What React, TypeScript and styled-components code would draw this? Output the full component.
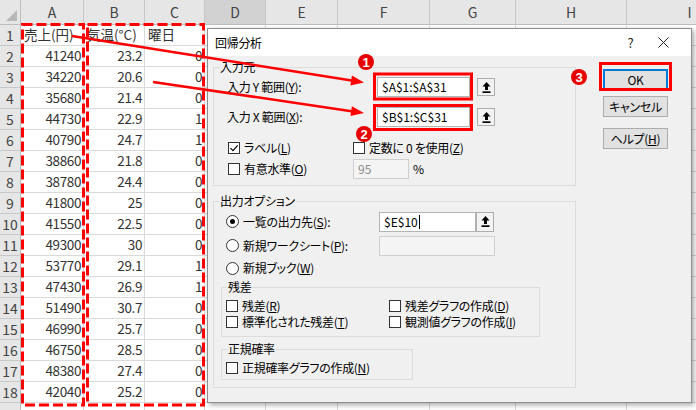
import React from "react";
import styled, { createGlobalStyle } from "styled-components";

const COLS = [21, 63, 61, 60, 61, 72, 92, 86, 111, 126];
const LETTERS = ["A", "B", "C", "D", "E", "F", "G", "H", "I"];

const data: string[][] = [
  ["売上(円)", "気温(°C)", "曜日"],
  ["41240", "23.2", "0"],
  ["34220", "20.6", "0"],
  ["35680", "21.4", "0"],
  ["44730", "22.9", "1"],
  ["40790", "24.7", "1"],
  ["38860", "21.8", "0"],
  ["38780", "24.4", "0"],
  ["41800", "25", "0"],
  ["41550", "22.5", "0"],
  ["49300", "30", "0"],
  ["53770", "29.1", "1"],
  ["47430", "26.9", "1"],
  ["51490", "30.7", "0"],
  ["46990", "25.7", "0"],
  ["46750", "28.5", "0"],
  ["48380", "27.4", "0"],
  ["42040", "25.2", "0"],
];

const GlobalStyle = createGlobalStyle`
  body {
    margin: 0;
    background: #fff;
    overflow: hidden;
  }
`;

const Page = styled.div`
  position: relative;
  width: 696px;
  height: 410px;
  overflow: hidden;
  background: #fff;
`;

/* ---------- sheet ---------- */

const Sheet = styled.div`
  display: grid;
  grid-template-columns: ${COLS.map((c) => c + "px").join(" ")};
  grid-template-rows: 25px;
  grid-auto-rows: 21px;
  font-family: "Noto Sans CJK JP", sans-serif;
  font-feature-settings: "palt" 1;
  font-size: 13.5px;
  line-height: 1;
  color: #333;
`;

const Corner = styled.div`
  position: relative;
  background: #e6e6e6;
  border-right: 1px solid #bdbdbd;
  border-bottom: 1px solid #bdbdbd;
  &::after {
    content: "";
    position: absolute;
    right: 3px;
    bottom: 3px;
    border-left: 11px solid transparent;
    border-bottom: 11px solid #b8b8b8;
  }
`;

const ColHead = styled.div<{ $active?: boolean }>`
  display: flex;
  align-items: center;
  justify-content: center;
  background: ${(p) => (p.$active ? "#d2d2d2" : "#e6e6e6")};
  border-right: 1px solid #c8c8c8;
  border-bottom: 1px solid #bdbdbd;
  color: #444;
  font-size: 14px;
`;

const RowHead = styled.div`
  display: flex;
  align-items: center;
  justify-content: center;
  background: #e6e6e6;
  border-right: 1px solid #bdbdbd;
  border-bottom: 1px solid #c8c8c8;
  color: #444;
  font-size: 14px;
`;

const Cell = styled.div<{ $num?: boolean }>`
  display: flex;
  align-items: center;
  justify-content: ${(p) => (p.$num ? "flex-end" : "flex-start")};
  padding: 0 2px 0 3px;
  border-right: 1px solid #dadada;
  border-bottom: 1px solid #dadada;
  white-space: nowrap;
  letter-spacing: ${(p) => (p.$num ? "-0.4px" : "0")};
`;

/* ---------- dialog ---------- */

const Dialog = styled.div`
  position: absolute;
  left: 207px;
  top: 28px;
  width: 485px;
  height: 375px;
  box-sizing: border-box;
  display: flex;
  flex-direction: column;
  background: #f0f0f0;
  border: 1px solid #8e8e8e;
  box-shadow: 2px 2px 5px rgba(0, 0, 0, 0.35);
  font-family: "Noto Sans CJK JP", sans-serif;
  font-feature-settings: "palt" 1;
  font-size: 12px;
  line-height: 16px;
  letter-spacing: -0.3px;
  color: #000;
`;

const TitleBar = styled.div`
  height: 27px;
  display: flex;
  align-items: center;
  padding-left: 7px;
  background: #fff;
`;

const Title = styled.span`
  flex: 1;
`;

const TitleButton = styled.span`
  width: 33px;
  display: flex;
  justify-content: center;
  align-items: center;
  color: #222;
  font-size: 13px;
  &:last-child {
    margin-right: 11px;
  }
`;

const Body = styled.div`
  display: flex;
  gap: 27px;
  padding: 3px 0 0 5px;
`;

const LeftCol = styled.div`
  width: 363px;
  display: flex;
  flex-direction: column;
`;

const RightCol = styled.div`
  width: 65px;
  padding-top: 10px;
  display: flex;
  flex-direction: column;
`;

const Group = styled.fieldset<{ $w?: number; $mt?: number; $ml?: number; $pb?: number }>`
  margin: ${(p) => p.$mt ?? 0}px 0 0 ${(p) => p.$ml ?? 0}px;
  padding: 0 0 ${(p) => p.$pb ?? 0}px;
  width: ${(p) => (p.$w ? p.$w + "px" : "auto")};
  box-sizing: border-box;
  min-width: 0;
  border: 1px solid #dcdcdc;
`;

const Legend = styled.legend`
  margin-left: 5px;
  padding: 0 1px;
  line-height: 16px;
`;

const Row = styled.div<{ $mt?: number; $h?: number; $pl?: number }>`
  display: flex;
  align-items: center;
  height: ${(p) => p.$h ?? 20}px;
  margin-top: ${(p) => p.$mt ?? 0}px;
  padding-left: ${(p) => p.$pl ?? 13}px;
  white-space: nowrap;
`;

const FieldLabel = styled.span<{ $w: number }>`
  width: ${(p) => p.$w}px;
  flex-shrink: 0;
`;

const TextBox = styled.div<{ $w: number; $disabled?: boolean }>`
  width: ${(p) => p.$w}px;
  height: 20px;
  box-sizing: border-box;
  display: flex;
  align-items: center;
  padding-left: 4px;
  letter-spacing: 0;
  background: ${(p) => (p.$disabled ? "#f4f4f4" : "#fff")};
  border: 1px solid ${(p) => (p.$disabled ? "#cfcfcf" : "#b4b4b4")};
  color: ${(p) => (p.$disabled ? "#8a8a8a" : "#000")};
  flex-shrink: 0;
`;

const Caret = styled.span`
  display: inline-block;
  width: 1px;
  height: 14px;
  margin-left: 1px;
  background: #000;
`;

const RefButton = styled.div<{ $ml?: number; $h?: number }>`
  width: 18px;
  height: ${(p) => p.$h ?? 18}px;
  margin-left: ${(p) => p.$ml ?? 7}px;
  box-sizing: border-box;
  display: flex;
  align-items: center;
  justify-content: center;
  background: #f3f3f3;
  border: 1px solid #adadad;
  flex-shrink: 0;
`;

const Item = styled.label<{ $w?: number }>`
  display: flex;
  align-items: center;
  gap: 4px;
  width: ${(p) => (p.$w ? p.$w + "px" : "auto")};
  flex-shrink: 0;
`;

const Box = styled.span`
  width: 12px;
  height: 12px;
  box-sizing: border-box;
  display: inline-flex;
  align-items: center;
  justify-content: center;
  background: #fff;
  border: 1px solid #333;
  flex-shrink: 0;
`;

const Radio = styled.span<{ $on?: boolean }>`
  width: 13px;
  height: 13px;
  box-sizing: border-box;
  border-radius: 50%;
  display: inline-flex;
  align-items: center;
  justify-content: center;
  background: #fff;
  border: 1px solid #333;
  flex-shrink: 0;
  &::after {
    content: "";
    width: 5px;
    height: 5px;
    border-radius: 50%;
    background: ${(p) => (p.$on ? "#000" : "transparent")};
  }
`;

const Grid2 = styled.div`
  display: grid;
  grid-template-columns: 163px auto;
  grid-auto-rows: 16px;
  margin-top: 3px;
  padding-left: 4px;
  white-space: nowrap;
`;

const Button = styled.div<{ $mt?: number; $focus?: boolean }>`
  height: 21px;
  margin-top: ${(p) => p.$mt ?? 0}px;
  box-sizing: border-box;
  display: flex;
  align-items: center;
  justify-content: center;
  background: #e1e1e1;
  border: 1px solid ${(p) => (p.$focus ? "#0078d7" : "#adadad")};
  box-shadow: ${(p) => (p.$focus ? "inset 0 0 0 1px #0078d7" : "none")};
`;

const Percent = styled.span`
  margin-left: 4px;
`;

/* ---------- annotations ---------- */

const Overlay = styled.svg`
  position: absolute;
  left: 0;
  top: 0;
  pointer-events: none;
`;

const RED = "#f00";

const UpIcon = () => (
  <svg width="9" height="11" viewBox="0 0 9 11">
    <path d="M4.5 0 L8.5 4.6 H6 V8 H3 V4.6 H0.5 Z" fill="#000" />
    <rect x="0.5" y="9.3" width="8" height="1.7" fill="#000" />
  </svg>
);

const Check = () => (
  <svg width="10" height="10" viewBox="0 0 10 10">
    <path d="M1.5 5.2 L4 7.7 L8.7 2.3" fill="none" stroke="#000" strokeWidth="1.2" />
  </svg>
);

const CloseIcon = () => (
  <svg width="11" height="11" viewBox="0 0 11 11">
    <path d="M0.5 0.5 L10.5 10.5 M10.5 0.5 L0.5 10.5" stroke="#222" strokeWidth="1" />
  </svg>
);

const Arrow = ({ x1, y1, x2, y2 }: { x1: number; y1: number; x2: number; y2: number }) => {
  const len = Math.hypot(x2 - x1, y2 - y1);
  const ux = (x2 - x1) / len;
  const uy = (y2 - y1) / len;
  const hl = 13;
  const hw = 5;
  const bx = x2 - ux * hl;
  const by = y2 - uy * hl;
  const pts = `${x2},${y2} ${bx - uy * hw},${by + ux * hw} ${bx + uy * hw},${by - ux * hw}`;
  return (
    <g>
      <line x1={x1} y1={y1} x2={bx + ux * 2} y2={by + uy * 2} stroke={RED} strokeWidth={2.5} />
      <polygon points={pts} fill={RED} />
    </g>
  );
};

const Marker = ({ x, y, n }: { x: number; y: number; n: number }) => (
  <g>
    <circle cx={x} cy={y} r={8} fill="#e60000" />
    <text
      x={x}
      y={y + 4.5}
      textAnchor="middle"
      fill="#fff"
      fontSize="13"
      fontWeight="bold"
      fontFamily="Liberation Sans, sans-serif"
    >
      {n}
    </text>
  </g>
);

const Annotations = () => (
  <Overlay width={696} height={410}>
    <rect x={22.5} y={24.5} width={61} height={380.5} fill="none" stroke={RED} strokeWidth={3} strokeDasharray="10 4" />
    <rect x={87.5} y={24.5} width={116} height={380.5} fill="none" stroke={RED} strokeWidth={3} strokeDasharray="10 4" />
    <Arrow x1={72} y1={36} x2={364} y2={82.5} />
    <Arrow x1={153} y1={82} x2={364} y2={113} />
    <rect x={374.5} y={74} width={97} height={25} fill="none" stroke={RED} strokeWidth={3} />
    <rect x={374.5} y={105.5} width={97} height={24} fill="none" stroke={RED} strokeWidth={3} />
    <rect x={600.5} y={63.5} width={70} height={26} fill="none" stroke={RED} strokeWidth={3} />
    <Marker x={366} y={62} n={1} />
    <Marker x={364} y={134} n={2} />
    <Marker x={579} y={77} n={3} />
  </Overlay>
);

/* ---------- dialog content ---------- */

const Check1 = ({ children, checked, w }: { children: React.ReactNode; checked?: boolean; w?: number }) => (
  <Item $w={w}>
    <Box>{checked && <Check />}</Box>
    <span>{children}</span>
  </Item>
);

const Option = ({ children, on, w }: { children: React.ReactNode; on?: boolean; w?: number }) => (
  <Item $w={w}>
    <Radio $on={on} />
    <span>{children}</span>
  </Item>
);

const RegressionDialog = () => (
  <Dialog>
    <TitleBar>
      <Title>回帰分析</Title>
      <TitleButton>?</TitleButton>
      <TitleButton>
        <CloseIcon />
      </TitleButton>
    </TitleBar>
    <Body>
      <LeftCol>
        <Group $pb={6}>
          <Legend>入力元</Legend>
          <Row $mt={1} $h={22} $pl={13}>
            <FieldLabel $w={150}>
              入力 Y 範囲(<u>Y</u>):
            </FieldLabel>
            <TextBox $w={93}>$A$1:$A$31</TextBox>
            <RefButton>
              <UpIcon />
            </RefButton>
          </Row>
          <Row $mt={8} $h={22} $pl={13}>
            <FieldLabel $w={150}>
              入力 X 範囲(<u>X</u>):
            </FieldLabel>
            <TextBox $w={93}>$B$1:$C$31</TextBox>
            <RefButton>
              <UpIcon />
            </RefButton>
          </Row>
          <Row $mt={10} $pl={14}>
            <Check1 checked w={125}>
              ラベル(<u>L</u>)
            </Check1>
            <Check1>
              定数に 0 を使用(<u>Z</u>)
            </Check1>
          </Row>
          <Row $mt={1} $pl={14}>
            <Check1 w={125}>
              有意水準(<u>O</u>)
            </Check1>
            <TextBox $w={56} $disabled>
              95
            </TextBox>
            <Percent>%</Percent>
          </Row>
        </Group>

        <Group $mt={7} $pb={7}>
          <Legend>出力オプション</Legend>
          <Row $mt={2} $h={21} $pl={12}>
            <Option on w={153}>
              一覧の出力先(<u>S</u>):
            </Option>
            <TextBox $w={97}>
              $E$10
              <Caret />
            </TextBox>
            <RefButton $ml={0} $h={20}>
              <UpIcon />
            </RefButton>
          </Row>
          <Row $mt={3} $h={21} $pl={12}>
            <Option w={153}>
              新規ワークシート(<u>P</u>):
            </Option>
            <TextBox $w={116} $disabled />
          </Row>
          <Row $mt={2} $pl={12}>
            <Option>
              新規ブック(<u>W</u>)
            </Option>
          </Row>

          <Group $mt={1} $ml={7} $w={319} $pb={6}>
            <Legend>残差</Legend>
            <Grid2>
              <Check1>
                残差(<u>R</u>)
              </Check1>
              <Check1>
                残差グラフの作成(<u>D</u>)
              </Check1>
              <Check1>
                標準化された残差(<u>T</u>)
              </Check1>
              <Check1>
                観測値グラフの作成(<u>I</u>)
              </Check1>
            </Grid2>
          </Group>

          <Group $mt={4} $ml={7} $w={192} $pb={3}>
            <Legend>正規確率</Legend>
            <Grid2>
              <Check1>
                正規確率グラフの作成(<u>N</u>)
              </Check1>
            </Grid2>
          </Group>
        </Group>
      </LeftCol>

      <RightCol>
        <Button $focus>OK</Button>
        <Button $mt={6}>キャンセル</Button>
        <Button $mt={11}>
          <span>
            ヘルプ(<u>H</u>)
          </span>
        </Button>
      </RightCol>
    </Body>
  </Dialog>
);

const App = () => (
  <Page>
    <GlobalStyle />
    <Sheet>
      <Corner />
      {LETTERS.map((l) => (
        <ColHead key={l} $active={l === "D"}>
          {l}
        </ColHead>
      ))}
      {data.map((row, i) => (
        <React.Fragment key={i}>
          <RowHead>{i + 1}</RowHead>
          {row.map((v, j) => (
            <Cell key={j} $num={i > 0}>
              {v}
            </Cell>
          ))}
          {LETTERS.slice(3).map((l) => (
            <Cell key={l} />
          ))}
        </React.Fragment>
      ))}
      <RowHead />
      {LETTERS.map((l) => (
        <Cell key={l} />
      ))}
    </Sheet>
    <RegressionDialog />
    <Annotations />
  </Page>
);

export default App;
